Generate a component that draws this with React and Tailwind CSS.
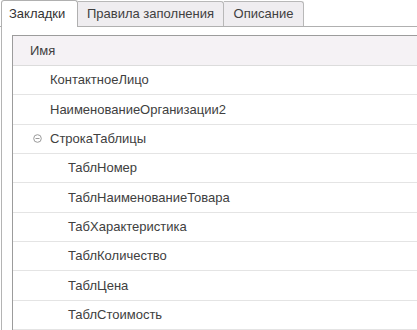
import React from 'react';

const rows = [
  { name: 'КонтактноеЛицо', level: 1 },
  { name: 'НаименованиеОрганизации2', level: 1 },
  { name: 'СтрокаТаблицы', level: 1, group: true },
  { name: 'ТаблНомер', level: 2 },
  { name: 'ТаблНаименованиеТовара', level: 2 },
  { name: 'ТабХарактеристика', level: 2 },
  { name: 'ТаблКоличество', level: 2 },
  { name: 'ТаблЦена', level: 2 },
  { name: 'ТаблСтоимость', level: 2 },
];

function CollapseIcon() {
  return (
    <svg width="9" height="9" viewBox="0 0 9 9" className="shrink-0">
      <circle cx="4.5" cy="4.5" r="3.8" fill="none" stroke="#9a9a9a" strokeWidth="1" />
      <line x1="2.5" y1="4.5" x2="6.5" y2="4.5" stroke="#9a9a9a" strokeWidth="1" />
    </svg>
  );
}

export default function App() {
  return (
    <div className="w-[417px] h-[330px] overflow-hidden bg-white text-[13px] text-[#404040] font-['Liberation_Sans',Arial,sans-serif]">
      {/* tabs */}
      <div className="flex h-[27px] items-end border-b border-[#b0b0b0] pl-px">
        <div className="h-[27px] w-[77px] -mb-px flex items-center pl-[7px] bg-white border border-b-0 border-[#b0b0b0] rounded-t-[3px] text-[#333]">
          Закладки
        </div>
        <div className="h-[25px] w-[146px] flex items-center justify-center bg-[#efedf0] border border-l-0 border-b-0 border-[#b8b8b8] rounded-tr-[3px]">
          Правила заполнения
        </div>
        <div className="h-[25px] w-[80px] flex items-center justify-center bg-[#efedf0] border border-l-0 border-b-0 border-[#b8b8b8] rounded-tr-[3px]">
          Описание
        </div>
      </div>

      {/* panel */}
      <div className="ml-px border-l border-[#b4b4b4] h-[303px] pt-[8px] pl-[10px]">
        <div className="border-l border-t border-[#9c9c9c]">
          <div className="h-[30px] flex items-center pl-[17px] bg-[#f5f2f5] border-b border-[#dcdcdc]">
            Имя
          </div>
          {rows.map((r) => (
            <div
              key={r.name}
              className={
                'h-[29.33px] flex items-center border-b border-[#e4e4e4] ' +
                (r.level === 2 ? 'pl-[55px]' : r.group ? 'pl-[20px]' : 'pl-[37px]')
              }
            >
              {r.group && (
                <span className="mr-[8px] flex items-center">
                  <CollapseIcon />
                </span>
              )}
              {r.name}
            </div>
          ))}
        </div>
      </div>
    </div>
  );
}
